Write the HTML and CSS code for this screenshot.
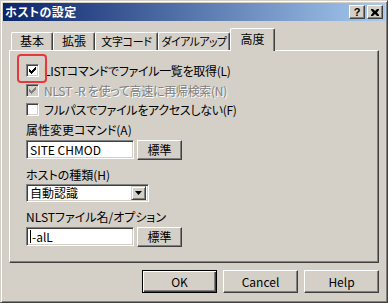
FILE: index.html
```html
<!DOCTYPE html>
<html lang="ja">

<head>
    <meta charset="utf-8" />
    <title>ホストの設定</title>
    <link rel="stylesheet" href="styles.css">
</head>

<body>
    <div class="window">
        <div class="titlebar">
            <span class="title">ホストの設定</span>
            <div class="title-buttons">
                <span class="tbtn">?</span>
                <span class="tbtn">
                    <svg width="8" height="7" viewBox="0 0 8 7">
                        <path d="M0 0h2l2 2 2-2h2v1l-2 2.5 2 2.5v1h-2l-2-2-2 2h-2v-1l2-2.5-2-2.5z" fill="#000" />
                    </svg>
                </span>
            </div>
        </div>

        <div class="tabs">
            <div class="tab w42">基本</div>
            <div class="tab w42">拡張</div>
            <div class="tab w63">文字コード</div>
            <div class="tab w72">ダイアルアップ</div>
            <div class="tab active">高度</div>
        </div>

        <div class="panel">
            <div class="highlight"></div>
            <div class="check">
                <span class="box">
                    <svg width="7" height="7" viewBox="0 0 7 7">
                        <path d="M0 2h1v1h1v1h1v-1h1v-1h1v-1h1v-1h1v3h-1v1h-1v1h-1v1h-1v1h-1v-1h-1v-1h-1z" fill="#000" />
                    </svg>
                </span>
                LISTコマンドでファイル一覧を取得(L)
            </div>
            <div class="check disabled">
                <span class="box">
                    <svg width="7" height="7" viewBox="0 0 7 7">
                        <path d="M0 2h1v1h1v1h1v-1h1v-1h1v-1h1v-1h1v3h-1v1h-1v1h-1v1h-1v1h-1v-1h-1v-1h-1z" fill="#808080" />
                    </svg>
                </span>
                NLST -R を使って高速に再帰検索(N)
            </div>
            <div class="check">
                <span class="box"></span>
                フルパスでファイルをアクセスしない(F)
            </div>

            <div class="label first">属性変更コマンド(A)</div>
            <div class="field">
                <div class="textbox">SITE CHMOD</div>
                <div class="button small">標準</div>
            </div>

            <div class="label">ホストの種類(H)</div>
            <div class="combo">
                <span class="combo-text">自動認識</span>
                <span class="combo-arrow">
                    <svg width="7" height="4" viewBox="0 0 7 4">
                        <path d="M0 0h7l-3.5 4z" fill="#000" />
                    </svg>
                </span>
            </div>

            <div class="label">NLSTファイル名/オプション</div>
            <div class="field">
                <div class="textbox"><span class="caret"></span>-alL</div>
                <div class="button small">標準</div>
            </div>
        </div>

        <div class="actions">
            <div class="button default">OK</div>
            <div class="button">Cancel</div>
            <div class="button">Help</div>
        </div>
    </div>
</body>

</html>
```

FILE: styles.css
```css
body {
    margin: 0;
    background-color: #d4d0c8;
    font-family: "Noto Sans CJK JP", "Liberation Sans", sans-serif;
    font-size: 12px;
    font-feature-settings: "palt";
    color: #000;
}

.window {
    box-sizing: border-box;
    width: 388px;
    height: 303px;
    padding: 2px;
    border: 1px solid;
    border-color: #d4d0c8 #404040 #404040 #d4d0c8;
    box-shadow: inset 1px 1px #fff, inset -1px -1px #808080;
    background-color: #d4d0c8;
}

/* title bar */
.titlebar {
    display: flex;
    align-items: center;
    justify-content: space-between;
    height: 18px;
    padding: 0 2px 0 2px;
    background: linear-gradient(to right, #0a246a, #a6caf0);
}

.title {
    color: #fff;
    font-weight: bold;
    letter-spacing: 0.4px;
    line-height: 18px;
}

.title-buttons {
    display: flex;
    gap: 2px;
}

.tbtn {
    box-sizing: border-box;
    display: flex;
    align-items: center;
    justify-content: center;
    width: 16px;
    height: 14px;
    background-color: #d4d0c8;
    border: 1px solid;
    border-color: #fff #404040 #404040 #fff;
    box-shadow: inset -1px -1px #808080;
    font-family: "Liberation Sans", sans-serif;
    font-weight: bold;
    font-size: 11px;
    line-height: 12px;
}

/* tabs */
.tabs {
    display: flex;
    align-items: flex-end;
    height: 22px;
    margin: 7px 0 0 6px;
    padding-left: 2px;
}

.tab {
    box-sizing: border-box;
    display: flex;
    justify-content: center;
    height: 18px;
    border-top: 1px solid #fff;
    border-left: 1px solid #fff;
    border-right: 1px solid #404040;
    border-radius: 2px 2px 0 0;
    box-shadow: inset -1px 0 #808080;
    line-height: 16px;
    white-space: nowrap;
}

.w42 {
    width: 42px;
}

.w63 {
    width: 63px;
    font-size: 11px;
    letter-spacing: -0.3px;
}

.w72 {
    width: 72px;
    font-size: 11px;
    letter-spacing: -0.6px;
}

.tab.active {
    position: relative;
    z-index: 1;
    width: 45px;
    height: 23px;
    margin-bottom: -1px;
    background-color: #d4d0c8;
    line-height: 20px;
}

/* panel */
.panel {
    position: relative;
    box-sizing: border-box;
    width: 370px;
    height: 213px;
    margin-left: 6px;
    padding: 13px 16px 0;
    border: 1px solid;
    border-color: #fff #404040 #404040 #fff;
    box-shadow: inset -1px -1px #808080;
}

.highlight {
    position: absolute;
    left: 7px;
    top: 3px;
    width: 30px;
    height: 29px;
    box-sizing: border-box;
    border: 2px solid #e8383a;
    border-radius: 4px;
}

.check {
    display: flex;
    align-items: center;
    gap: 5px;
    height: 13px;
    margin-bottom: 6.5px;
    letter-spacing: -0.3px;
    line-height: 13px;
    white-space: nowrap;
}

.check.disabled {
    color: #808080;
    text-shadow: 1px 1px #fff;
}

.box {
    box-sizing: border-box;
    display: flex;
    align-items: center;
    justify-content: center;
    flex: none;
    width: 13px;
    height: 13px;
    background-color: #fff;
    border: 1px solid;
    border-color: #808080 #fff #fff #808080;
    box-shadow: inset 1px 1px #404040, inset -1px -1px #d4d0c8;
}

.check.disabled .box {
    background-color: #d4d0c8;
}

.label {
    height: 14px;
    margin-top: 8px;
    line-height: 14px;
    white-space: nowrap;
}

.label.first {
    margin-top: 4px;
}

.field {
    display: flex;
    gap: 3px;
    margin-top: 3px;
}

.textbox,
.combo {
    box-sizing: border-box;
    height: 19px;
    padding: 0 3px;
    background-color: #fff;
    border: 1px solid;
    border-color: #808080 #fff #fff #808080;
    box-shadow: inset 1px 1px #404040, inset -1px -1px #d4d0c8;
    line-height: 17px;
    white-space: nowrap;
}

.textbox {
    display: flex;
    align-items: center;
    width: 108px;
}

.caret {
    width: 1px;
    height: 13px;
    margin-right: 1px;
    background-color: #000;
}

.combo {
    display: flex;
    align-items: center;
    justify-content: space-between;
    width: 123px;
    height: 18px;
    margin-top: 2px;
    padding: 2px 2px 2px 3px;
}

.combo-arrow {
    box-sizing: border-box;
    display: flex;
    align-items: center;
    justify-content: center;
    width: 15px;
    height: 14px;
    background-color: #d4d0c8;
    border: 1px solid;
    border-color: #d4d0c8 #404040 #404040 #d4d0c8;
    box-shadow: inset 1px 1px #fff, inset -1px -1px #808080;
}

.button {
    box-sizing: border-box;
    display: flex;
    align-items: center;
    justify-content: center;
    width: 75px;
    height: 23px;
    background-color: #d4d0c8;
    border: 1px solid;
    border-color: #fff #404040 #404040 #fff;
    box-shadow: inset -1px -1px #808080;
    white-space: nowrap;
}

.button.small {
    width: 45px;
    height: 20px;
}

.button.default {
    border-color: #000;
    box-shadow: inset 1px 1px #fff, inset -1px -1px #404040, inset -2px -2px #808080;
}

/* bottom buttons */
.actions {
    display: flex;
    justify-content: flex-end;
    gap: 6px;
    margin-top: 7px;
    padding-right: 6px;
}
```
